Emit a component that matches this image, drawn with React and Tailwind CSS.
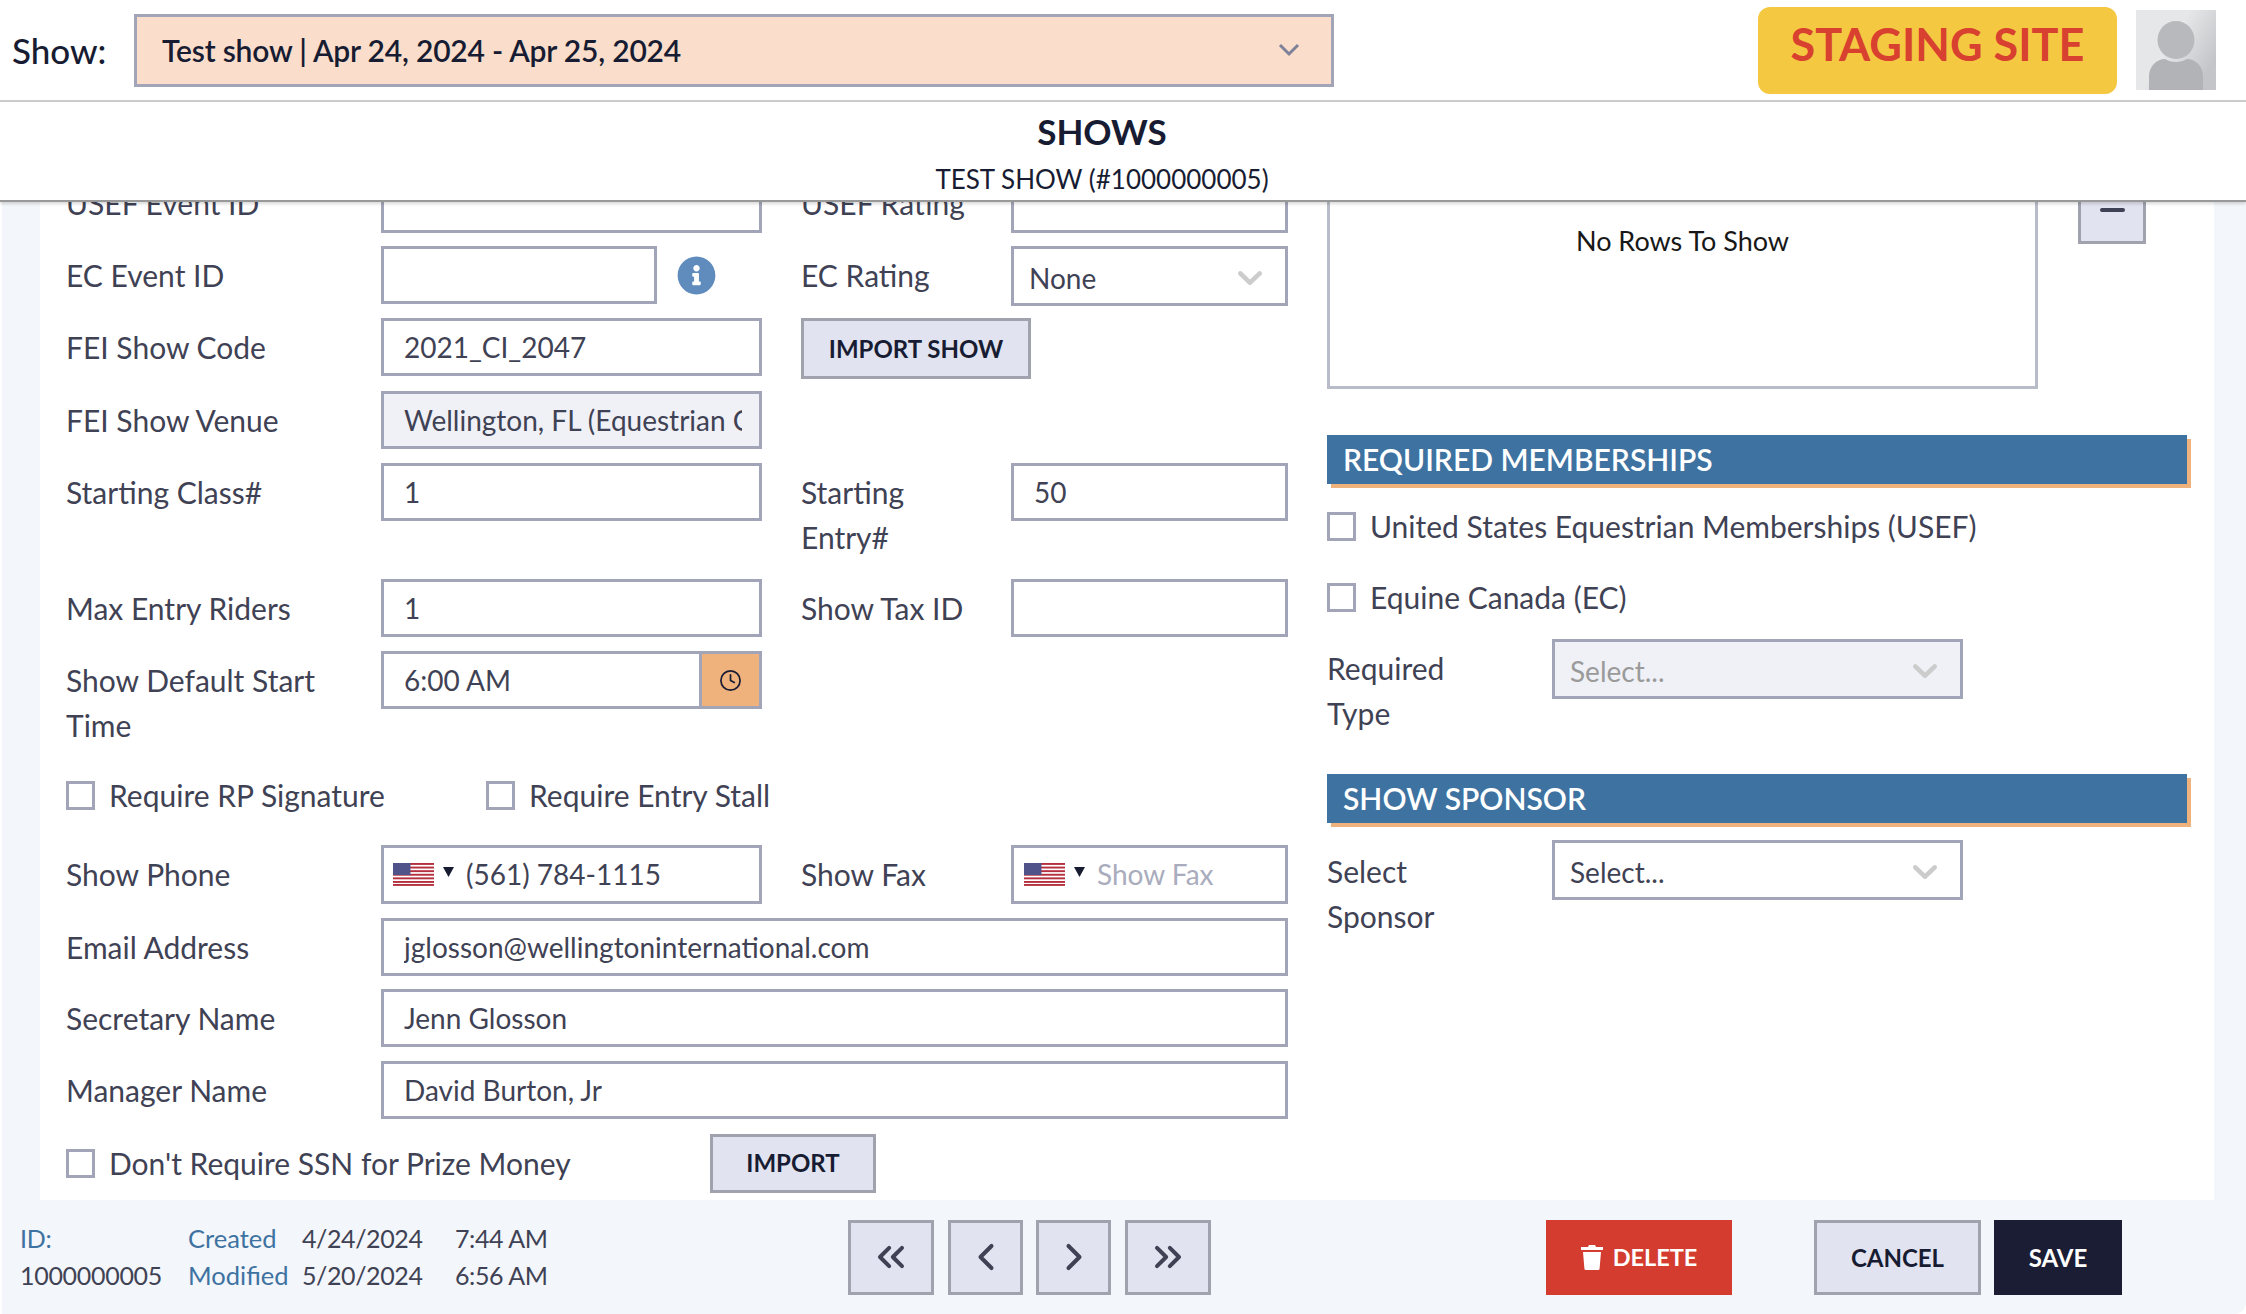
import React from "react";
import { ChevronsLeft, ChevronLeft, ChevronRight, ChevronsRight, Clock } from "lucide-react";
import { FaInfoCircle } from "react-icons/fa";

// react-select style chevron
const SelectChevron = () => (
  <svg width="24" height="14" viewBox="4.2 7.2 11.6 6.8" fill="#cccccc" preserveAspectRatio="none" className="shrink-0">
    <path d="M4.516 7.548c.436-.446 1.043-.481 1.576 0L10 11.295l3.908-3.747c.533-.481 1.141-.446 1.574 0 .436.445.408 1.197 0 1.615-.406.418-4.695 4.502-4.695 4.502a1.095 1.095 0 0 1-1.576 0S4.924 9.581 4.516 9.163c-.409-.418-.436-1.17 0-1.615z" />
  </svg>
);

const UsFlag = ({ w }) => (
  <svg width={w} height="23" viewBox="0 0 40 23" preserveAspectRatio="none" className="shrink-0">
    <rect width="40" height="23" fill="#fff" />
    {[0, 3.6, 7.2, 10.8, 14.4, 18, 21].map((y) => (
      <rect key={y} y={y} width="40" height="1.9" fill="#b5303f" />
    ))}
    <rect width="17" height="12" fill="#50528a" />
  </svg>
);

const labelCls = "text-[30px] leading-[45px] text-[#3f4254]";
const inputCls =
  "h-full w-full border-[3px] border-[#a1a5b7] pl-[20px] pr-[17px] text-[28px] text-[#3f4254] outline-none";

const Label = ({ children, className = "" }) => (
  <div className={`${labelCls} pt-[7px] ${className}`}>{children}</div>
);

const Text = ({ value, className = "", bg = "bg-white" }) => (
  <div className={`h-[58px] ${className}`}>
    <input readOnly value={value} className={`${inputCls} ${bg}`} />
  </div>
);

const Check = ({ label, className = "" }) => (
  <div className={`flex items-center gap-[14px] ${className}`}>
    <span className="h-[29px] w-[29px] shrink-0 border-[3px] border-[#a1a5b7] bg-white" />
    <span className={labelCls}>{label}</span>
  </div>
);

const Section = ({ children, className = "" }) => (
  <div
    className={`flex h-[49px] w-[860px] items-center bg-[#3d72a1] pl-4 text-[30px] font-semibold text-white shadow-[4px_4px_0_#f0b27d] ${className}`}
  >
    {children}
  </div>
);

const Btn = ({ children, className = "" }) => (
  <button
    className={`flex items-center justify-center border-[3px] border-[#a0a3ae] bg-[#e1e4f0] text-[24px] font-bold text-[#181c32] ${className}`}
  >
    {children}
  </button>
);

const PhoneField = ({ value, placeholder, className = "" }) => (
  <div className={`flex h-[59px] items-center border-[3px] border-[#a1a5b7] bg-white ${className}`}>
    <UsFlag w={41} />
    <svg width="11" height="10" viewBox="0 0 11 10" fill="#181c32" className="ml-[9px] mb-[4px] mr-[12px] shrink-0">
      <path d="M0 0h11L5.5 10z" />
    </svg>
    <span className={`text-[28px] ${value ? "text-[#3f4254]" : "text-[#a9acbd]"}`}>{value || placeholder}</span>
  </div>
);

const App = () => {
  return (
    <div className="flex h-[1314px] w-[2246px] flex-col overflow-hidden bg-white font-['Lato',sans-serif]">
      {/* top bar */}
      <div className="flex h-[102px] shrink-0 items-center border-b-2 border-[#cccccc] pl-3">
        <span className="w-[122px] text-[35px] font-medium text-[#181c32]">Show:</span>
        <div className="flex h-[73px] w-[1200px] items-center justify-between border-[3px] border-[#a1a5b7] bg-[#fadecb] pl-[25px] pr-[31px]">
          <span className="text-[30px] font-semibold tracking-[-0.2px] text-[#181c32]">
            Test show | Apr 24, 2024 - Apr 25, 2024
          </span>
          <svg width="22" height="14" viewBox="0 0 22 14" fill="none" stroke="#7e8299" strokeWidth="3">
            <path d="M2 2l9 9 9-9" />
          </svg>
        </div>
        <div className="ml-[424px] flex h-[87px] w-[359px] justify-center rounded-xl bg-[#f5c842] pt-[6px] text-[45px] font-bold leading-[62px] text-[#d8402f]">
          STAGING SITE
        </div>
        <svg width="80" height="80" viewBox="0 0 80 80" className="ml-[19px] shrink-0">
          <defs>
            <linearGradient id="avatarBg" x1="0" y1="0" x2="1" y2="0.6">
              <stop offset="0.5" stopColor="#e6e7e9" />
              <stop offset="1" stopColor="#c4c5c8" />
            </linearGradient>
          </defs>
          <rect width="80" height="80" fill="url(#avatarBg)" />
          <ellipse cx="40" cy="30" rx="18.5" ry="19" fill="#b7b9bc" />
          <path d="M13 80V66c0-10 8-17 16-17 3 2 7 3 11 3s8-1 11-3c8 0 16 7 16 17v14z" fill="#b1b3b6" />
        </svg>
      </div>

      {/* page title */}
      <div className="relative z-10 flex h-[100px] shrink-0 flex-col items-center border-b-2 border-[#999999] bg-white pr-[42px] shadow-[0_2px_3px_rgba(0,0,0,0.15)]">
        <div className="mt-[7px] text-[35px] font-bold leading-[44px] text-[#181c32]">SHOWS</div>
        <div className="mt-[9px] text-[26px] leading-[34px] text-[#181c32]">TEST SHOW (#1000000005)</div>
      </div>

      {/* scrolled form */}
      <div className="min-h-0 flex-1 overflow-hidden border-l-2 border-white bg-[#f3f6fa] pl-[38px] pr-[32px]">
        <div className="flex h-full overflow-hidden bg-white pl-[26px]">
          {/* left column */}
          <div className="mt-[-27px] w-[1222px] shrink-0">
            <div className="mb-[12.5px] flex h-[58px]">
              <Label className="mt-[-1px] w-[315px]">USEF Event ID</Label>
              <Text value="" className="w-[381px]" />
              <Label className="ml-[39px] mt-[-1px] w-[210px]">USEF Rating</Label>
              <Text value="" className="w-[277px]" />
            </div>
            <div className="mb-[14.5px] flex h-[58px]">
              <Label className="w-[315px]">EC Event ID</Label>
              <Text value="" className="w-[276px]" />
              <div className="flex w-[105px] items-center pl-[20px] pt-[1px]">
                <FaInfoCircle size={39} color="#5f8bbd" />
              </div>
              <Label className="ml-[39px] w-[210px]">EC Rating</Label>
              <div className="flex h-[60px] w-[277px] items-center justify-between border-[3px] border-[#a1a5b7] bg-white pl-[15px] pr-[23px] pt-[4px] text-[28px] text-[#3f4254]">
                None
                <SelectChevron />
              </div>
            </div>
            <div className="mb-[14.5px] flex h-[58px]">
              <Label className="w-[315px]">FEI Show Code</Label>
              <Text value="2021_CI_2047" className="w-[381px]" />
              <Btn className="ml-[39px] h-[61px] w-[230px] shrink-0">IMPORT SHOW</Btn>
            </div>
            <div className="mb-[14.5px] flex h-[58px]">
              <Label className="w-[315px]">FEI Show Venue</Label>
              <Text value="Wellington, FL (Equestrian Cup)" className="w-[381px]" bg="bg-[#f0f1f6]" />
            </div>
            <div className="mb-[14.5px] flex h-[101px]">
              <Label className="w-[315px]">Starting Class#</Label>
              <Text value="1" className="w-[381px]" />
              <Label className="ml-[39px] w-[210px]">
                Starting
                <br />
                Entry#
              </Label>
              <Text value="50" className="w-[277px]" />
            </div>
            <div className="mb-[14.5px] flex h-[58px]">
              <Label className="w-[315px]">Max Entry Riders</Label>
              <Text value="1" className="w-[381px]" />
              <Label className="ml-[39px] w-[210px]">Show Tax ID</Label>
              <Text value="" className="w-[277px]" />
            </div>
            <div className="mb-[14.5px] flex h-[101px]">
              <Label className="w-[315px]">
                Show Default Start
                <br />
                Time
              </Label>
              <div className="flex h-[58px] w-[381px] border-[3px] border-[#a1a5b7]">
                <div className="flex-1 pl-[20px] text-[28px] leading-[52px] text-[#3f4254]">6:00 AM</div>
                <div className="flex w-[60px] items-center justify-center border-l-[3px] border-[#a1a5b7] bg-[#f0b27d]">
                  <Clock size={23} color="#181c32" strokeWidth={1.8} />
                </div>
              </div>
            </div>
            <div className="mb-[20px] flex h-[58px] items-center">
              <Check label="Require RP Signature" className="w-[420px]" />
              <Check label="Require Entry Stall" />
            </div>
            <div className="mb-[14px] flex h-[59px]">
              <Label className="w-[315px]">Show Phone</Label>
              <PhoneField value="(561) 784-1115" className="w-[381px] pl-[9px]" />
              <Label className="ml-[39px] w-[210px]">Show Fax</Label>
              <PhoneField placeholder="Show Fax" className="w-[277px] pl-[10px]" />
            </div>
            <div className="mb-[13px] flex h-[58px]">
              <Label className="w-[315px]">Email Address</Label>
              <Text value="jglosson@wellingtoninternational.com" className="w-[907px]" />
            </div>
            <div className="mb-[14px] flex h-[58px]">
              <Label className="w-[315px]">Secretary Name</Label>
              <Text value="Jenn Glosson" className="w-[907px]" />
            </div>
            <div className="mb-[15px] flex h-[58px]">
              <Label className="w-[315px]">Manager Name</Label>
              <Text value="David Burton, Jr" className="w-[907px]" />
            </div>
            <div className="flex h-[59px] items-center">
              <Check label="Don't Require SSN for Prize Money" className="w-[644px]" />
              <Btn className="h-[59px] w-[166px]">IMPORT</Btn>
            </div>
          </div>

          {/* right column */}
          <div className="ml-[39px] mt-[-29px] w-[860px] shrink-0">
            <div className="flex items-start">
              <div className="flex h-[216px] w-[711px] justify-center border-[3px] border-[#b8bcc8] pt-[45px] text-[27px] leading-[40px] text-[#181818]">
                No Rows To Show
              </div>
              <button className="ml-[40px] mt-[5px] flex h-[66px] w-[68px] items-center justify-center border-[3px] border-[#a0a3ae] border-t-0 bg-[#e1e4f0]">
                <span className="h-[4px] w-[25px] rounded-sm bg-[#3f4254]" />
              </button>
            </div>

            <Section className="mt-[46px]">REQUIRED MEMBERSHIPS</Section>
            <Check label="United States Equestrian Memberships (USEF)" className="mt-[20px]" />
            <Check label="Equine Canada (EC)" className="mt-[26px]" />
            <div className="mt-[19px] flex">
              <div className={`w-[225px] ${labelCls} pt-[7px]`}>
                Required
                <br />
                Type
              </div>
              <div className="flex h-[60px] w-[411px] items-center justify-between border-[3px] border-[#a1a5b7] bg-[#f0f1f6] pl-[15px] pr-[23px] pt-[3px] text-[28px] text-[#9a9a9a]">
                Select...
                <SelectChevron />
              </div>
            </div>

            <Section className="mt-[38px]">SHOW SPONSOR</Section>
            <div className="mt-[17px] flex">
              <div className={`w-[225px] ${labelCls} pt-[9px]`}>
                Select
                <br />
                Sponsor
              </div>
              <div className="flex h-[60px] w-[411px] items-center justify-between border-[3px] border-[#a1a5b7] bg-white pl-[15px] pr-[23px] pt-[3px] text-[28px] text-[#3f4254]">
                Select...
                <SelectChevron />
              </div>
            </div>
          </div>
        </div>
      </div>

      {/* footer */}
      <div className="flex h-[114px] shrink-0 items-center rounded-br-[12px] border-l-2 border-white bg-[#f3f6fa] pl-[18px] text-[25px] leading-[37px] text-[#3f4254]">
        <div className="w-[168px] tracking-[-0.3px]">
          <div className="text-[#3d72a1]">ID:</div>
          <div>1000000005</div>
        </div>
        <div className="w-[114px] text-[25.5px] text-[#3d72a1]">
          <div>Created</div>
          <div>Modified</div>
        </div>
        <div className="w-[153px] tracking-[-0.4px]">
          <div>4/24/2024</div>
          <div>5/20/2024</div>
        </div>
        <div className="w-[393px] tracking-[-0.4px]">
          <div>7:44 AM</div>
          <div>6:56 AM</div>
        </div>
        <div className="flex">
          <Btn className="h-[75px] w-[86px]">
            <ChevronsLeft size={44} color="#3f4254" strokeWidth={2.2} />
          </Btn>
          <Btn className="ml-[14px] h-[75px] w-[75px]">
            <ChevronLeft size={44} color="#3f4254" strokeWidth={2.2} />
          </Btn>
          <Btn className="ml-[13px] h-[75px] w-[75px]">
            <ChevronRight size={44} color="#3f4254" strokeWidth={2.2} />
          </Btn>
          <Btn className="ml-[14px] h-[75px] w-[86px]">
            <ChevronsRight size={44} color="#3f4254" strokeWidth={2.2} />
          </Btn>
        </div>
        <button className="ml-[335px] flex h-[75px] w-[186px] items-center justify-center gap-[10px] bg-[#d33c2e] text-[23.5px] font-bold text-white">
          <svg width="22" height="26" viewBox="0 0 22 26" fill="#ffffff">
            <path d="M0 3h7l1-2h6l1 2h7v3H0zM2 8h18l-1.4 16.5a1.5 1.5 0 0 1-1.5 1.5H4.9a1.5 1.5 0 0 1-1.5-1.5z" />
          </svg>
          DELETE
        </button>
        <Btn className="ml-[82px] h-[75px] w-[167px]">CANCEL</Btn>
        <button className="ml-[13px] h-[75px] w-[128px] bg-[#1a1d33] text-[24px] font-bold text-white">SAVE</button>
      </div>
    </div>
  );
};

export default App;
